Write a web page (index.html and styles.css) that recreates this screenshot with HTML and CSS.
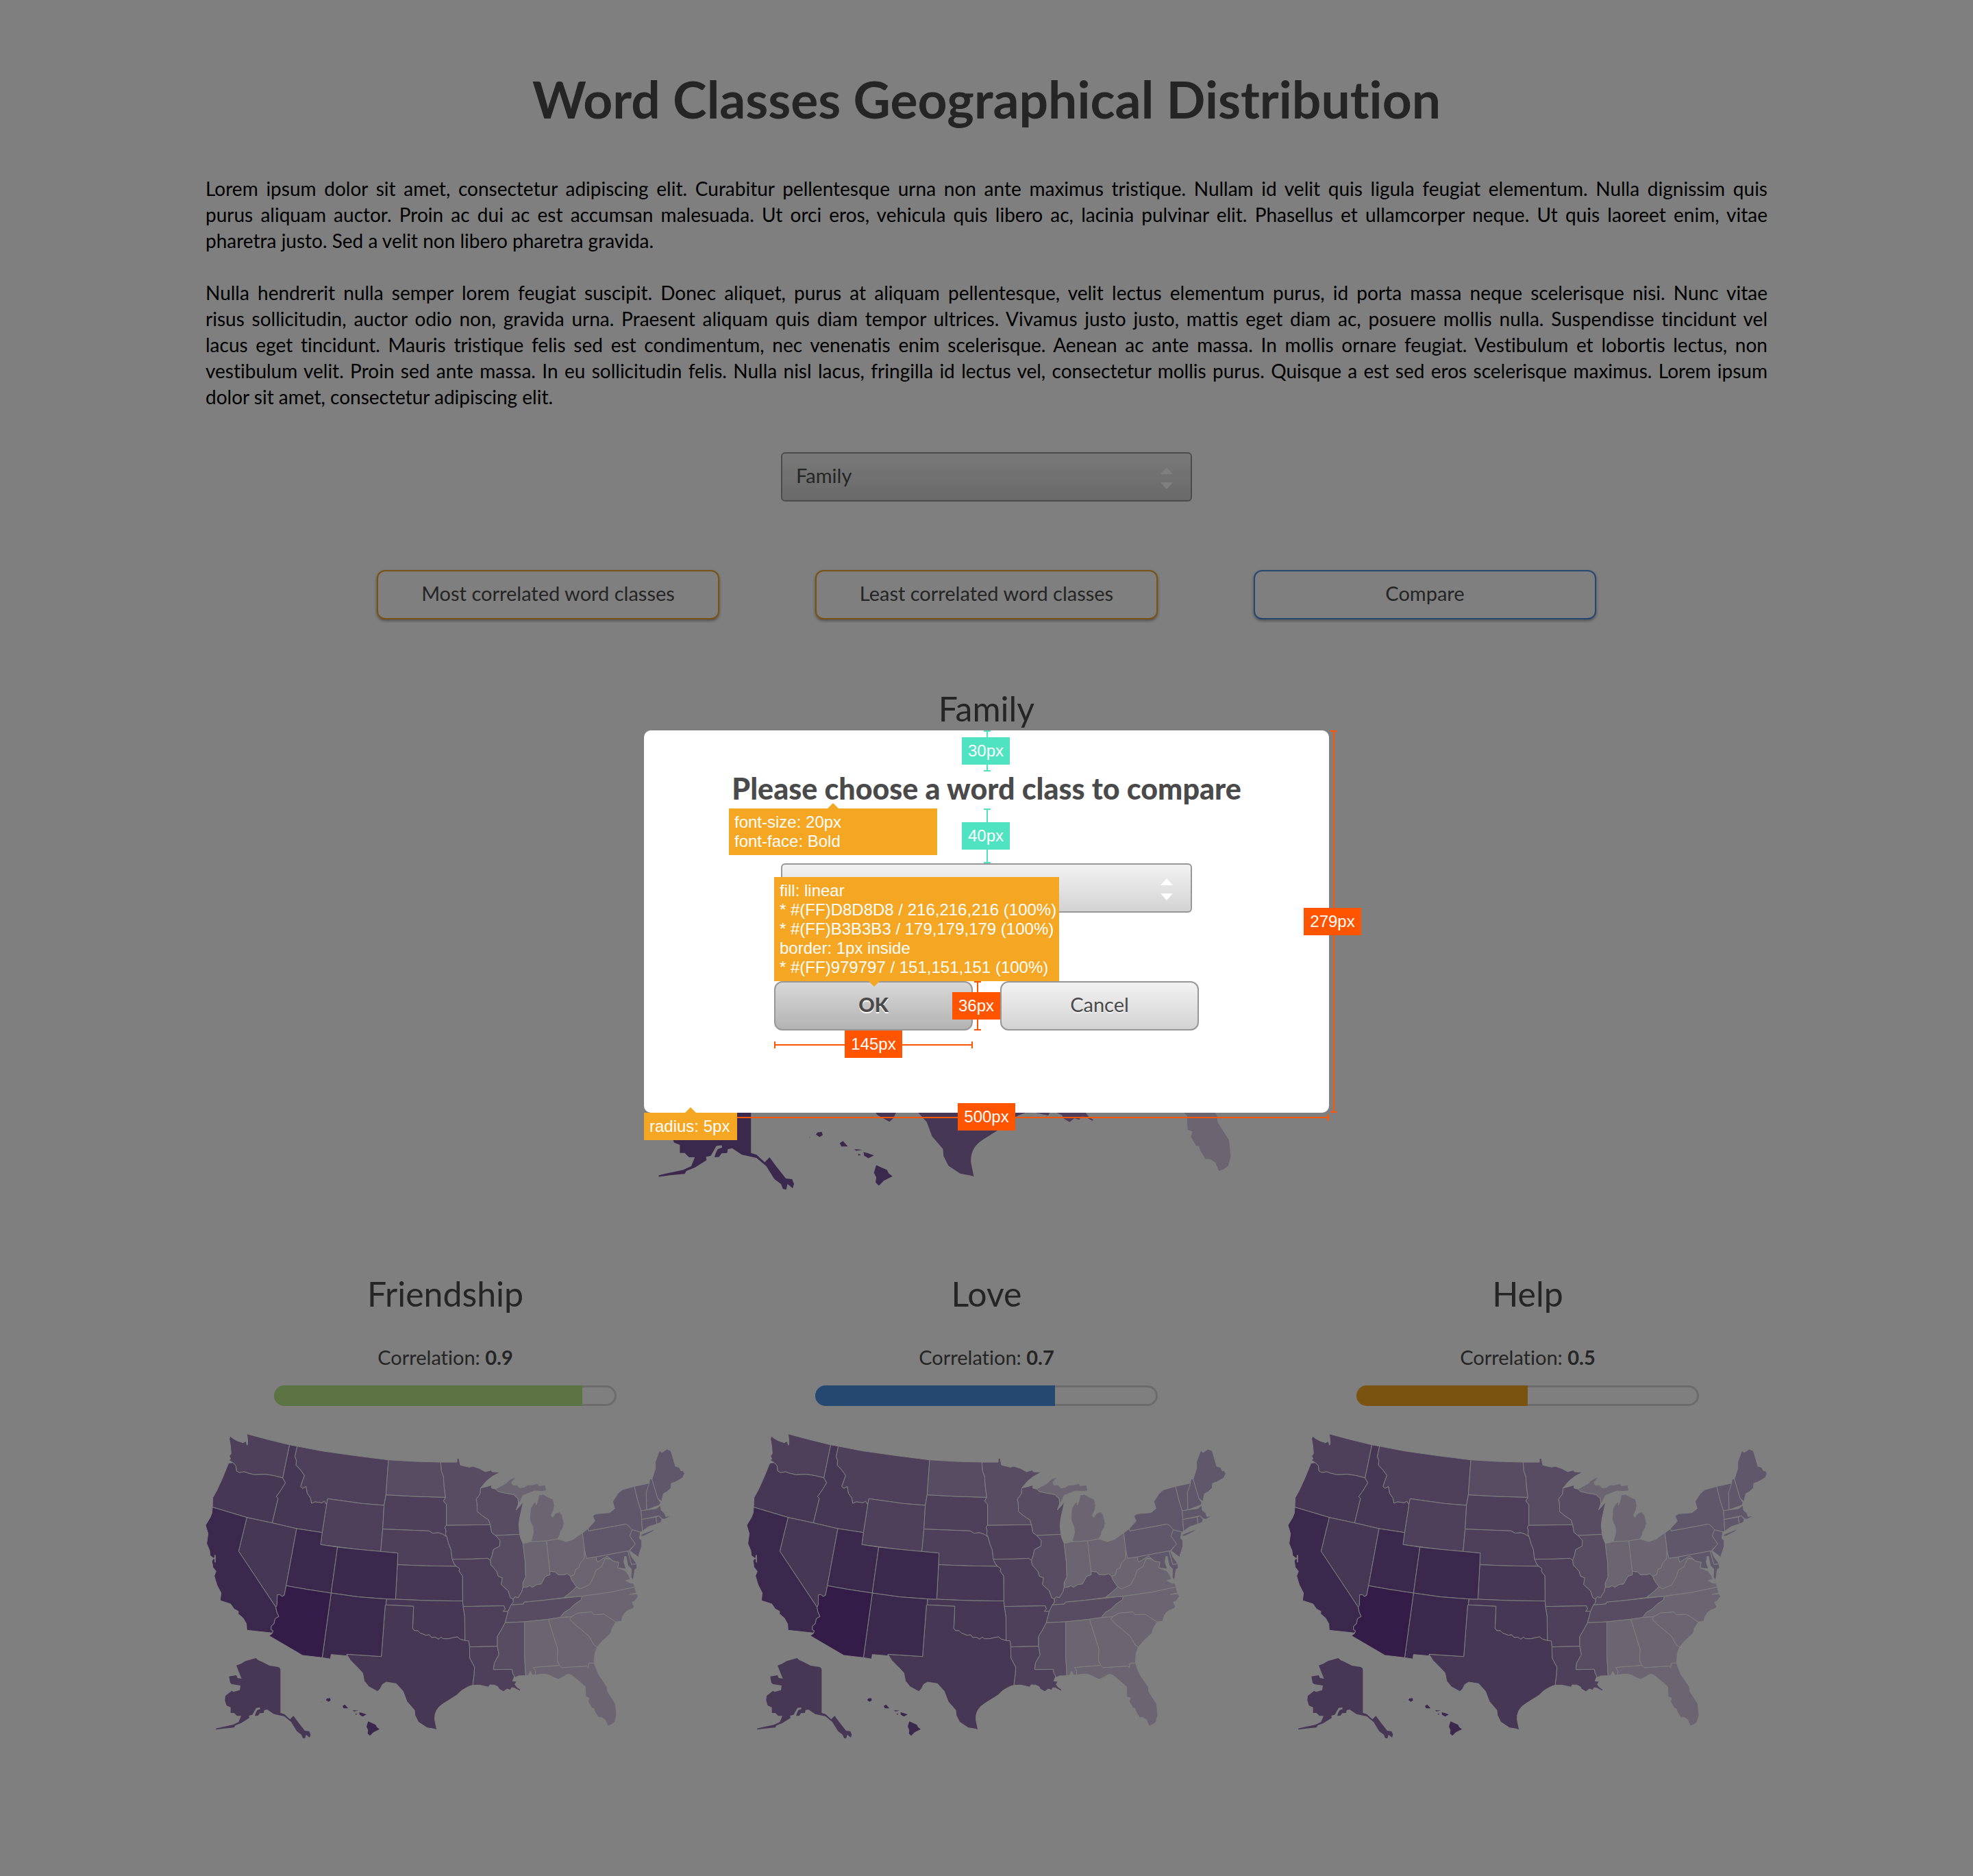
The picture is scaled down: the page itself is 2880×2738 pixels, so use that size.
FILE: index.html
```html
<!DOCTYPE html>
<html lang="en">
<head>
<meta charset="utf-8">
<title>Word Classes Geographical Distribution</title>
<link rel="stylesheet" href="styles.css">
</head>
<body>
<svg class="defs" aria-hidden="true">
  <symbol id="usa" viewBox="30 36 2100 1338">
    <g class="s4">
      <path d="M138,48 150,58 170,69 195,77 207,70 212,88 215,80 214,60 211,38 300,62 398,86 368,231 330,221 290,215 245,217 215,210 200,204 178,208 165,200 163,178 150,164 132,153 140,148 134,135 142,125 139,90 134,60Z"/>
      <path d="M431,92 540,113 680,133 831,152 820,305 812,351 715,343 565,322 560,348 550,333 540,340 510,336 494,342 490,320 475,298 470,269 455,277 446,268 463,220 445,195 426,175 428,155 421,138Z"/>
      <path d="M565,322 715,343 812,351 806,455 797,553 690,543 534,523 541,470 560,348Z"/>
      <path d="M820,305 950,312 1081,316 1072,332 1085,348 1085,438 1078,447 1083,462 1081,478 1087,490 1070,478 1050,471 1025,473 1008,463 806,455 812,351Z"/>
      <path d="M806,455 1008,463 1025,473 1050,471 1070,478 1087,490 1095,520 1105,545 1110,585 1120,610 1128,618 1000,616 870,611 872,560 797,553Z"/>
      <path d="M1085,438 1277,436 1283,470 1300,483 1320,505 1318,530 1290,545 1285,570 1277,592 1265,583 1200,586 1110,587 1105,545 1095,520 1087,490 1081,478 1083,462 1078,447Z"/>
      <path d="M1110,587 1200,586 1265,583 1277,592 1280,612 1305,640 1312,662 1330,668 1325,698 1355,725 1365,755 1377,762 1378,775 1368,787 1355,815 1333,815 1342,805 1337,791 1158,794 1156,770 1155,660 1140,640 1142,628 1128,618 1118,605Z"/>
      <path d="M1158,794 1337,791 1342,805 1333,815 1355,815 1350,835 1342,865 1325,897 1308,925 1308,968 1186,971 1183,945 1166,943 1165,840Z"/>
      <path d="M1186,971 1308,968 1315,1005 1295,1040 1291,1070 1372,1069 1375,1085 1383,1100 1375,1120 1393,1122 1385,1135 1395,1148 1410,1158 1405,1163 1380,1150 1370,1150 1365,1160 1350,1155 1335,1167 1315,1155 1310,1145 1295,1138 1275,1137 1270,1147 1230,1138 1200,1139 1206,1090 1208,1060 1187,1020Z"/>
    </g>
    <g class="s5">
      <path d="M150,164 163,178 165,200 178,208 200,204 215,210 245,217 290,215 330,221 368,231 380,252 362,282 355,292 340,313 348,321 322,428 211,404 60,359 62,317 80,285 105,230 131,166Z"/>
      <path d="M398,86 431,92 421,138 428,155 426,175 445,195 463,220 446,268 455,277 470,269 475,298 490,320 494,342 510,336 540,340 550,333 560,348 541,470 429,453 322,428 348,321 340,313 355,292 362,282 380,252 368,231Z"/>
      <path d="M211,404 322,428 429,453 383,703 375,745 365,750 355,742 344,743 343,788 338,797 175,552Z"/>
      <path d="M870,611 1000,616 1128,618 1142,628 1140,640 1155,660 1156,770 1000,768 862,762Z"/>
      <path d="M822,761 862,762 1000,768 1156,770 1158,794 1165,840 1166,943 1145,937 1132,927 1115,930 1095,935 1070,935 1062,928 1050,937 1035,928 1020,930 1010,918 995,920 970,910 960,900 945,900 937,890 941,793 820,787Z"/>
      <path d="M820,787 941,793 937,890 945,900 960,900 970,910 995,920 1010,918 1020,930 1035,928 1050,937 1062,928 1070,935 1095,935 1115,930 1132,927 1145,937 1166,943 1183,945 1186,971 1187,1020 1208,1060 1206,1090 1200,1139Q1185,1140 1150,1163 1130,1185 1110,1195L1070,1220Q1030,1245 1034,1290L1043,1334 1030,1330 1000,1325 962,1300 947,1270 945,1248 912,1210 895,1165 865,1132 822,1125 805,1135 795,1155 783,1166 745,1145 725,1120 718,1085 700,1065 665,1030 648,1003 800,1013 817,788Z"/>
    </g>
    <g class="s6">
      <path d="M60,359 211,404 175,552 338,797 342,818 351,838 335,847 330,870 318,880 317,895 326,900 322,910 211,898 209,870 195,845 173,826 174,815 155,805 140,783 94,768 98,735 80,700 68,660 76,640 62,622 58,595 64,582 50,570 48,550 35,518 41,475 30,438 50,405 58,385Z"/>
      <path d="M429,453 541,470 534,523 608,534 580,735 480,720 383,703Z"/>
      <path d="M608,534 690,543 797,553 872,560 870,611 862,762 822,761 700,752 580,735Z"/>
      <path d="M580,735 700,752 822,761 820,787 817,788 800,1013 648,1003 648,1010 580,1004 577,1024 541,1018Z"/>
      <g transform="translate(0 660)">
        <path d="M535,554 539,549 538,552ZM557,543 562,537 575,535 578,545 568,551ZM630,570 640,563 655,580 635,580ZM675,588 700,590 680,593ZM686,602 695,605 688,608ZM703,597 718,601 735,607 718,616 705,608ZM742,637 775,652 780,662 792,671 765,685 750,700 740,690 742,675 735,660Z"/>
      </g>
    </g>
    <path class="s7" d="M383,703 480,720 580,735 541,1018 455,1008 308,922 322,912 326,900 317,895 318,880 330,870 335,847 351,838 342,818 338,797 343,788 344,743 355,742 365,750 375,745Z"/>
    <path class="alaska" transform="translate(0 660)" d="M165,392 185,385 205,373 250,360 262,370 275,375 310,393 345,398Q358,400 358,412L358,600 375,605 400,628 415,613 435,640 465,678 484,680 490,695 486,708 470,695 466,712 456,710 450,695 430,680 405,640 375,615 330,605 300,585 287,588 285,600 268,601 260,612 246,613 250,600 256,588 270,583 268,576 252,578 235,608 220,612 222,622 185,645 160,655 155,664 110,668 75,673 76,668 100,662 150,652 175,640 186,613 168,613 155,600 140,600 140,575 122,568 115,545 117,525 145,503 152,508 180,500 183,480 145,474 138,468 133,440 165,435 170,447 188,450 178,425Z"/>
    <g class="s3">
      <path d="M831,152 950,159 1060,162 1063,200 1072,225 1075,270 1081,316 950,312 820,305Z"/>
      <path d="M1060,162 1131,162 1131,145 1140,145 1146,175 1185,184 1200,180 1230,190 1255,204 1280,197 1285,204 1320,206 1285,225 1260,245 1235,275 1233,300 1215,325 1219,340 1220,378 1240,395 1270,415 1277,436 1085,438 1085,348 1072,332 1081,316 1075,270 1072,225 1063,200Z"/>
      <path d="M1235,275 1265,268 1283,262 1283,276 1300,280 1310,290 1340,297 1380,304 1390,315 1398,320 1400,345 1390,372 1405,355 1421,337 1415,365 1405,410 1402,440 1406,478 1310,483 1300,483 1283,470 1277,436 1270,415 1240,395 1220,378 1219,340 1215,325 1233,300Z"/>
      <path d="M1300,483 1406,478 1410,495 1420,518 1425,560 1430,600 1432,665 1420,690 1420,710 1415,730 1405,745 1400,755 1385,752 1377,762 1365,755 1355,725 1325,698 1330,668 1312,662 1305,640 1280,612 1277,592 1285,570 1290,545 1318,530 1320,505Z"/>
      <path d="M1538,640 1560,642 1575,655 1600,655 1615,650 1628,662 1635,680 1655,708 1625,735 1600,755 1500,768 1425,775 1423,783 1368,787 1378,775 1377,762 1385,752 1400,755 1405,745 1415,730 1420,710 1440,708 1450,702 1460,710 1480,698 1500,695 1518,662 1538,655Z"/>
      <path d="M1368,787 1423,783 1425,775 1500,768 1600,757 1679,749 1675,765 1645,785 1625,805 1600,820 1583,842 1531,850 1427,861 1342,865 1350,835 1355,815Z"/>
      <path d="M1342,865 1427,861 1427,1010 1432,1097 1400,1098 1385,1105 1375,1085 1372,1069 1291,1070 1295,1040 1315,1005 1308,968 1308,925 1325,897Z"/>
    </g>
    <g class="s1">
      <path d="M1300,280 1345,255Q1370,228 1388,230L1370,250 1375,262 1395,262 1405,275 1425,272 1440,262 1460,262 1485,255 1490,265 1518,262 1523,287 1500,290 1470,288 1440,300 1420,308 1410,330 1402,345 1398,320 1390,315 1380,304 1340,297 1310,290Z"/>
      <path d="M1455,510 1466,470 1463,445 1450,415 1453,365 1465,345 1476,335 1478,350 1485,330 1490,305 1510,303 1530,315 1552,325 1558,350 1555,370 1543,395 1550,403 1563,385 1580,380 1592,395 1600,430 1595,450 1585,465 1582,480 1572,498 1523,507Z"/>
      <path d="M1420,518 1455,510 1523,507 1538,640 1538,655 1518,662 1500,695 1480,698 1460,710 1450,702 1440,708 1420,710 1420,690 1432,665 1430,600Z"/>
      <path d="M1523,507 1572,498 1610,510 1640,500 1660,485 1681,472 1690,545 1688,585 1670,605 1665,625 1650,632 1645,655 1628,662 1615,650 1600,655 1575,655 1560,642 1538,640Z"/>
      <path d="M1690,545 1698,583 1740,577 1745,600 1770,585 1790,573 1815,585 1795,583 1780,585 1765,620 1740,635 1730,665 1710,700 1670,717 1655,708 1635,680 1628,662 1645,655 1650,632 1665,625 1670,605 1688,585Z"/>
      <path d="M1600,755 1625,735 1655,708 1670,717 1710,700 1730,665 1740,635 1765,620 1780,585 1800,585 1815,595 1840,600 1835,625 1870,638 1885,660 1890,675 1870,680 1892,692 1905,692 1910,709 1800,732 1679,749Z"/>
      <path d="M1583,842 1600,820 1625,805 1645,785 1675,765 1679,749 1800,732 1910,709 1917,735 1886,741 1919,738 1925,750 1910,770 1898,775 1908,795 1900,803Q1855,815 1852,858L1827,862 1775,828 1730,830 1720,818 1660,823 1632,839Z"/>
      <path d="M1625,850 1632,839 1660,823 1720,818 1730,830 1775,828 1827,862 1810,890 1805,910 1765,948 1745,972 1730,962 1710,925 1675,895 1650,875Z"/>
      <path d="M1531,850 1583,842 1632,839 1625,850 1650,875 1675,895 1710,925 1730,962 1745,972 1735,1000 1732,1042 1708,1042 1706,1063 1700,1055 1590,1062 1580,1052 1570,1030 1572,980Z"/>
      <path d="M1427,861 1531,850 1572,980 1570,1030 1580,1052 1465,1061 1475,1075 1475,1092 1462,1095 1452,1078 1445,1095 1432,1097 1427,1010Z"/>
      <path d="M1465,1061 1580,1052 1590,1062 1700,1055 1706,1063 1708,1042 1732,1042 1750,1090 1788,1145 1790,1165 1825,1220 1830,1270 1822,1300 1810,1310 1792,1317 1780,1290 1765,1280 1750,1280 1735,1255 1730,1240 1722,1240 1705,1210 1710,1195 1695,1190 1693,1145 1670,1125 1640,1100Q1620,1082 1600,1100L1575,1113 1555,1105Q1520,1080 1475,1095L1475,1075Z"/>
    </g>
    <g class="s2">
      <path d="M1681,472 1705,453 1708,463 1870,433 1880,438 1898,458 1888,485 1912,520 1885,550 1740,577 1698,583 1690,545Z"/>
      <path d="M1705,453 1735,420 1725,397 1740,388 1800,383 1822,365 1813,335 1835,300 1855,283 1908,268 1923,330 1937,375 1940,413 1943,465 1935,468 1898,458 1880,438 1870,433 1708,463Z"/>
      <path d="M1935,487 1940,478 2000,454 1985,467 1950,485Z"/>
      <path d="M1908,268 1973,254 1972,275 1960,295 1962,371 1937,375 1923,330Z"/>
      <path d="M1973,254 1975,236 1985,236 2010,320 2023,340 2018,350 1962,371 1960,295Z"/>
      <path d="M1985,236 2000,190 2000,160 2018,111 2028,120 2050,105 2068,112 2088,180 2105,185 2112,200 2122,200 2128,212 2120,230 2100,242 2085,250 2070,255 2068,275 2050,292 2035,300 2027,335 2010,320Z"/>
      <path d="M1937,375 1962,371 2005,365 2023,350 2025,372 2040,385 2045,400 2070,397 2040,412 2030,410 2015,397 1940,413Z"/>
      <path d="M1940,413 2003,402 2006,433 1970,445 1943,464Z"/>
      <path d="M2003,402 2015,397 2028,412 2025,425 2006,433Z"/>
      <path d="M1898,458 1935,468 1930,495 1940,505 1940,530 1925,578 1888,550 1912,520 1888,485Z"/>
      <path d="M1880,553 1885,550 1895,575 1918,607 1895,610Z"/>
      <path d="M1740,577 1879,551 1895,610 1918,608 1920,625 1910,632 1903,680 1893,665 1895,630 1880,615 1872,575 1865,575 1862,600 1872,630 1835,625 1840,600 1815,595 1790,573 1770,585 1745,600Z"/>
    </g>
    <path class="inlet" d="M60,584 70,584 72,570 72,601"/>
  </symbol>
</svg>

<div class="page">
  <main class="content">
    <h1>Word Classes Geographical Distribution</h1>
    <div class="intro">
      <p>
        <span class="line">Lorem ipsum dolor sit amet, consectetur adipiscing elit. Curabitur pellentesque urna non ante maximus tristique. Nullam id velit quis ligula feugiat elementum. Nulla dignissim quis</span>
        <span class="line">purus aliquam auctor. Proin ac dui ac est accumsan malesuada. Ut orci eros, vehicula quis libero ac, lacinia pulvinar elit. Phasellus et ullamcorper neque. Ut quis laoreet enim, vitae</span>
        pharetra justo. Sed a velit non libero pharetra gravida.
      </p>
      <p>
        <span class="line">Nulla hendrerit nulla semper lorem feugiat suscipit. Donec aliquet, purus at aliquam pellentesque, velit lectus elementum purus, id porta massa neque scelerisque nisi. Nunc vitae</span>
        <span class="line">risus sollicitudin, auctor odio non, gravida urna. Praesent aliquam quis diam tempor ultrices. Vivamus justo justo, mattis eget diam ac, posuere mollis nulla. Suspendisse tincidunt vel</span>
        <span class="line">lacus eget tincidunt. Mauris tristique felis sed est condimentum, nec venenatis enim scelerisque. Aenean ac ante massa. In mollis ornare feugiat. Vestibulum et lobortis lectus, non</span>
        <span class="line">vestibulum velit. Proin sed ante massa. In eu sollicitudin felis. Nulla nisl lacus, fringilla id lectus vel, consectetur mollis purus. Quisque a est sed eros scelerisque maximus. Lorem ipsum</span>
        dolor sit amet, consectetur adipiscing elit.
      </p>
    </div>

    <div class="picker">
      <select class="select" aria-label="Word class"><option>Family</option></select>
      <svg class="arrows" viewBox="0 0 18 32" aria-hidden="true"><path d="M9 0 18 10H0ZM0 22H18L9 32Z"/></svg>
    </div>

    <div class="actions">
      <button class="btn btn-orange" type="button">Most correlated word classes</button>
      <button class="btn btn-orange" type="button">Least correlated word classes</button>
      <button class="btn btn-blue" type="button">Compare</button>
    </div>

    <section class="main-class">
      <h2>Family</h2>
      <svg class="map map-main" viewBox="0 0 2100 1338" role="img" aria-label="Family map"><use href="#usa" width="2100" height="1338"/></svg>
    </section>

    <div class="results">
      <section class="result">
        <h2>Friendship</h2>
        <p class="corr">Correlation: <b>0.9</b></p>
        <div class="meter" role="meter" aria-label="Friendship correlation" aria-valuemin="0" aria-valuemax="1" aria-valuenow="0.9"><div class="fill green" style="width:90%"></div></div>
        <svg class="map" viewBox="0 0 2100 1338" role="img" aria-label="Friendship map"><use href="#usa" width="2100" height="1338"/></svg>
      </section>
      <section class="result">
        <h2>Love</h2>
        <p class="corr">Correlation: <b>0.7</b></p>
        <div class="meter" role="meter" aria-label="Love correlation" aria-valuemin="0" aria-valuemax="1" aria-valuenow="0.7"><div class="fill blue" style="width:70%"></div></div>
        <svg class="map" viewBox="0 0 2100 1338" role="img" aria-label="Love map"><use href="#usa" width="2100" height="1338"/></svg>
      </section>
      <section class="result">
        <h2>Help</h2>
        <p class="corr">Correlation: <b>0.5</b></p>
        <div class="meter" role="meter" aria-label="Help correlation" aria-valuemin="0" aria-valuemax="1" aria-valuenow="0.5"><div class="fill orange" style="width:50%"></div></div>
        <svg class="map" viewBox="0 0 2100 1338" role="img" aria-label="Help map"><use href="#usa" width="2100" height="1338"/></svg>
      </section>
    </div>
  </main>

  <div class="backdrop">
    <div class="modal" role="dialog" aria-labelledby="modal-title">
      <h3 id="modal-title">Please choose a word class to compare</h3>
      <div class="picker">
        <select class="select" aria-label="Word class to compare"><option></option></select>
        <svg class="arrows" viewBox="0 0 18 32" aria-hidden="true"><path d="M9 0 18 10H0ZM0 22H18L9 32Z"/></svg>
      </div>
      <div class="modal-actions">
        <button class="mbtn mbtn-ok" type="button">OK</button>
        <button class="mbtn" type="button">Cancel</button>
      </div>

      <div class="rule rule-v teal gap-top"><span class="tag">30px</span></div>
      <div class="rule rule-v teal gap-mid"><span class="tag">40px</span></div>
      <div class="rule rule-v red btn-height"><span class="tag">36px</span></div>
      <div class="rule rule-h red btn-width"><span class="tag tag-wide">145px</span></div>
      <div class="rule rule-v red modal-height"><span class="tag tag-wide">279px</span></div>
      <div class="rule rule-h red modal-width"><span class="tag tag-wide">500px</span></div>
      <div class="note note-up note-font">font-size: 20px<br>font-face: Bold</div>
      <div class="note note-down note-fill">fill: linear<br>* #(FF)D8D8D8 / 216,216,216 (100%)<br>* #(FF)B3B3B3 / 179,179,179 (100%)<br>border: 1px inside<br>* #(FF)979797 / 151,151,151 (100%)</div>
      <div class="note note-up note-radius">radius: 5px</div>
    </div>
  </div>
</div>
</body>
</html>
```
FILE: styles.css
```css
* { box-sizing: border-box; }
body {
  margin: 0;
  background: #fff;
  color: #000;
  font: 29px/38px Lato, "Open Sans", sans-serif;
  font-variant-ligatures: none;
}
h1, h2, h3, p { margin: 0; }
.defs { position: absolute; width: 0; height: 0; }

.page { position: relative; min-height: 100vh; }
.content {
  display: flex;
  flex-direction: column;
  align-items: center;
  padding: 100px 300px 200px;
}
h1 {
  color: #4a4a4a;
  font-size: 75px;
  line-height: 88px;
  font-weight: 700;
}
h2 {
  color: #4a4a4a;
  font-size: 50px;
  line-height: 60px;
  font-weight: 400;
  text-align: center;
}
.intro {
  display: flex;
  flex-direction: column;
  gap: 38px;
  width: 100%;
  margin-top: 68px;
  font-size: 28px;
}
.line { display: block; text-align: justify; text-align-last: justify; }

/* drop-downs */
.picker { position: relative; width: 600px; }
.content .picker { margin-top: 62px; }
.select {
  display: block;
  appearance: none;
  width: 100%;
  height: 72px;
  padding: 0 20px 4px;
  border: 2px solid #979797;
  border-radius: 6px;
  background: linear-gradient(#f2f2f2, #d3d3d3);
  color: #4a4a4a;
  font: inherit;
}
.arrows {
  position: absolute;
  top: 22px;
  right: 28px;
  width: 18px;
  height: 32px;
  fill: #fff;
  pointer-events: none;
}

/* buttons */
.actions { display: flex; gap: 140px; margin-top: 100px; }
.btn {
  width: 500px;
  height: 72px;
  padding: 0 0 4px;
  border: 2px solid;
  border-radius: 12px;
  background: #fff;
  color: #4a4a4a;
  font: inherit;
  box-shadow: 0 2px 4px rgba(0, 0, 0, .4);
}
.btn-orange { border-color: #f5a623; }
.btn-blue { border-color: #4a90e2; }

/* maps */
.main-class { width: 1000px; margin-top: 100px; }
.map { display: block; width: 100%; }
.map-main { margin-top: 36px; --alaska: #76509a; }
.alaska { fill: var(--alaska, #8c6eaa); }
.s1 { fill: #d4cae0; }
.s2 { fill: #beaed4; }
.s3 { fill: #b098c6; }
.s4 { fill: #9c80b6; }
.s5 { fill: #8c6eaa; }
.s6 { fill: #76509a; }
.s7 { fill: #663a90; }
#usa { stroke: #fff; stroke-width: 3; stroke-linejoin: round; }
.alaska, .s6 g { stroke: none; }
.inlet { fill: none; stroke-width: 5; }

/* correlation columns */
.results {
  display: grid;
  grid-template-columns: repeat(3, 1fr);
  gap: 90px;
  width: 100%;
  margin-top: 121px;
}
.result { display: flex; flex-direction: column; align-items: center; }
.corr { margin-top: 44px; color: #4a4a4a; }
.meter {
  width: 500px;
  height: 30px;
  margin: 22px 0 40px;
  border-radius: 15px;
  box-shadow: inset 0 0 0 3px #d8d8d8;
  overflow: hidden;
}
.fill { height: 100%; }
.green { background: #b8e986; }
.blue { background: #4a90e2; }
.orange { background: #f5a623; }

/* modal */
.backdrop {
  position: absolute;
  inset: 0;
  display: flex;
  justify-content: center;
  align-items: flex-start;
  padding-top: 1066px;
  background: rgba(0, 0, 0, .5);
}
.modal {
  position: relative;
  display: flex;
  flex-direction: column;
  align-items: center;
  width: 1000px;
  padding: 58px 0 120px;
  border-radius: 10px;
  background: #fff;
}
.modal h3 {
  margin-bottom: 82px;
  color: #4a4a4a;
  font-size: 43px;
  line-height: 54px;
  font-weight: 900;
}
.modal-actions { display: flex; gap: 40px; margin-top: 100px; }
.mbtn {
  width: 290px;
  height: 72px;
  padding: 0 0 4px;
  border: 2px solid #979797;
  border-radius: 12px;
  background: linear-gradient(#f2f2f2, #d3d3d3);
  color: #4a4a4a;
  font: inherit;
  text-shadow: 0 2px 0 rgba(255, 255, 255, .6);
}
.mbtn-ok {
  background: linear-gradient(#d8d8d8, #b3b3b3);
  font-weight: 900;
  text-shadow: 0 2px 0 #fff;
}

/* measurements */
.rule, .note {
  position: absolute;
  color: #fff;
  font: 24px/28px "Liberation Sans", Arial, sans-serif;
}
.teal { --ink: #50e3c2; }
.red { --ink: #ff5500; }
.rule { display: flex; align-items: center; justify-content: center; }
.rule-v {
  width: 10px;
  border: solid var(--ink);
  border-width: 2px 0;
  background: linear-gradient(var(--ink), var(--ink)) center / 2px 100% no-repeat;
}
.rule-h {
  height: 10px;
  border: solid var(--ink);
  border-width: 0 2px;
  background: linear-gradient(var(--ink), var(--ink)) center / 100% 2px no-repeat;
}
.tag {
  flex: none;
  width: 70px;
  padding: 6px 0;
  background: var(--ink);
  text-align: center;
}
.tag-wide { width: 84px; }
.rule-v .tag { margin-right: 4px; }
.rule-h .tag { margin-bottom: 2px; }
.gap-top { left: 496px; top: 0; height: 60px; }
.gap-mid { left: 496px; top: 114px; height: 80px; }
.btn-height { left: 482px; top: 366px; height: 72px; }
.btn-width { left: 190px; top: 454px; width: 290px; }
.modal-height { left: 1002px; top: 0; height: 100%; }
.modal-width { left: 0; top: 560px; width: 100%; }
.note { padding: 6px 8px; background: #f5a623; white-space: nowrap; }
.note::before {
  content: "";
  position: absolute;
  border: solid transparent;
  border-width: 0 8px;
}
.note-up::before { left: 60px; bottom: 100%; border-bottom: 8px solid #f5a623; }
.note-down::before { left: 138px; top: 100%; border-top: 8px solid #f5a623; }
.note-font { left: 124px; top: 114px; width: 304px; }
.note-font::before { left: 144px; }
.note-fill { left: 190px; top: 214px; width: 416px; }
.note-radius { left: 0; top: 100%; width: 136px; }
```
